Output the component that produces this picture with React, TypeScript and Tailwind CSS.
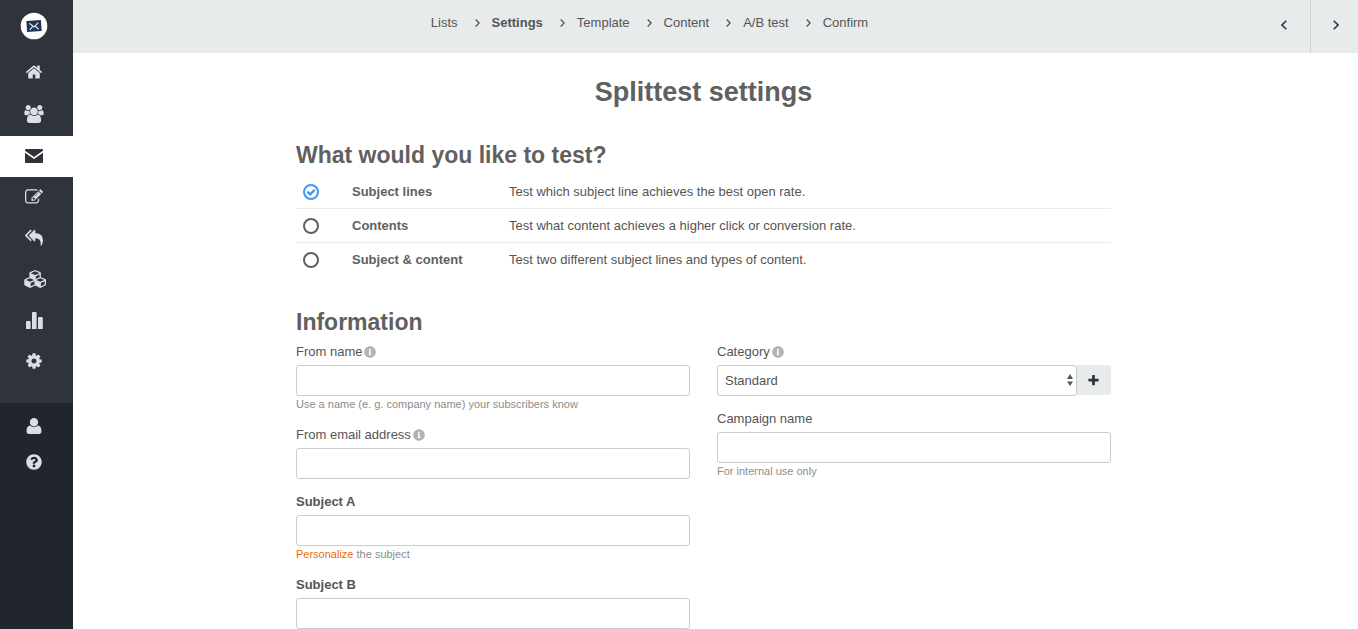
import { FC, Fragment, ReactNode, useState } from "react"
import { FaInfoCircle, FaQuestionCircle } from "react-icons/fa"
import clsx from "clsx"

interface GlyphProps {
  d: string
  className?: string
  viewBox?: string
}

const Glyph: FC<GlyphProps> = ({ d, className, viewBox = "0 0 1792 1792" }) => (
  <svg viewBox={viewBox} className={clsx("block shrink-0", className)} fill="currentColor" aria-hidden="true">
    <path d={d} />
  </svg>
)

const paths = {
  home: "M1472 992v480q0 26-19 45t-45 19h-384v-384h-256v384h-384q-26 0-45-19t-19-45v-480q0-1 .5-3t.5-3l575-474 575 474q1 2 1 6zm223-69l-62 74q-8 9-21 11h-3q-13 0-21-7l-692-577-692 577q-12 8-24 7-13-2-21-11l-62-74q-8-10-7-23.5t11-21.5l719-599q32-26 76-26t76 26l244 204v-195q0-14 9-23t23-9h192q14 0 23 9t9 23v408l219 182q10 8 11 21.5t-7 23.5z",
  users: "M529 896q-162 5-265 128h-134q-82 0-138-40.5t-56-118.5q0-353 124-353 6 0 43.5 21t97.5 42.5 119 21.5q67 0 133-23-5 37-5 66 0 139 81 256zm1071 637q0 120-73 189.5t-194 69.5h-874q-121 0-194-69.5t-73-189.5q0-53 3.5-103.5t14-109 26.5-108.5 43-97.5 62-81 85.5-53.5 111.5-20q10 0 43 21.5t73 48 107 48 135 21.5 135-21.5 107-48 73-48 43-21.5q61 0 111.5 20t85.5 53.5 62 81 43 97.5 26.5 108.5 14 109 3.5 103.5zm-1024-1277q0 106-75 181t-181 75-181-75-75-181 75-181 181-75 181 75 75 181zm704 384q0 159-112.5 271.5t-271.5 112.5-271.5-112.5-112.5-271.5 112.5-271.5 271.5-112.5 271.5 112.5 112.5 271.5zm576 225q0 78-56 118.5t-138 40.5h-134q-103-123-265-128 81-117 81-256 0-29-5-66 66 23 133 23 59 0 119-21.5t97.5-42.5 43.5-21q124 0 124 353zm-128-609q0 106-75 181t-181 75-181-75-75-181 75-181 181-75 181 75 75 181z",
  envelope: "M1 2h16q1 0 1 1v.8L9 10 0 3.8V3q0-1 1-1zM0 5.8 9 12l9-6.2V15q0 1-1 1H1q-1 0-1-1z",
  edit: "M888 1184l116-116-152-152-116 116v56h96v96h56zm440-720q-16-16-33 1l-350 350q-17 17-1 33t33-1l350-350q17-17 1-33zm80 594v190q0 119-84.5 203.5t-203.5 84.5h-832q-119 0-203.5-84.5t-84.5-203.5v-832q0-119 84.5-203.5t203.5-84.5h832q63 0 117 25 15 7 18 23 3 17-9 29l-49 49q-14 14-32 8-23-6-45-6h-832q-66 0-113 47t-47 113v832q0 66 47 113t113 47h832q66 0 113-47t47-113v-126q0-13 9-22l64-64q15-15 35-7t20 29zm-96-738l288 288-672 672h-288v-288zm444 132l-92 92-288-288 92-92q28-28 68-28t68 28l152 152q28 28 28 68t-28 68z",
  replyAll: "M640 1082v70q0 42-39 59-13 5-25 5-27 0-45-19l-512-512q-19-19-19-45t19-45l512-512q29-31 70-14 39 17 39 59v69l-397 398q-19 19-19 45t19 45zm1152 58q0 58-17 133.5t-38.5 138-48 125-40.5 90.5l-20 40q-8 17-28 17-6 0-9-1-25-8-23-34 43-400-106-565-64-71-170.5-110.5t-267.5-52.5v251q0 42-39 59-13 5-25 5-27 0-45-19l-512-512q-19-19-19-45t19-45l512-512q29-31 70-14 39 17 39 59v262q411 28 599 221 169 173 169 509z",
  cubes: "M640 1632l384-192v-314l-384 164v342zm-64-454l404-173-404-173-404 173zm1088 454l384-192v-314l-384 164v342zm-64-454l404-173-404-173-404 173zm-448-293l384-165v-266l-384 164v267zm-64-379l441-189-441-189-441 189zm1088 518v416q0 36-19 67t-52 47l-448 224q-25 14-57 14t-57-14l-448-224q-4-2-7-4-2 2-7 4l-448 224q-25 14-57 14t-57-14l-448-224q-33-16-52-47t-19-67v-416q0-38 21.5-70t56.5-48l434-186v-400q0-38 21.5-70t56.5-48l448-192q23-10 50-10t50 10l448 192q35 16 56.5 48t21.5 70v400l434 186q36 16 57 48t21 70z",
  bars: "M1 18v-7q0-1 1-1h2.6q1 0 1 1v7zM7 18V2q0-1 1-1h2.6q1 0 1 1v16zM13 18V7q0-1 1-1h2.8q1 0 1 1v11z",
  cog: "M1152 896q0-106-75-181t-181-75-181 75-75 181 75 181 181 75 181-75 75-181zm512-109v222q0 12-8 23t-20 13l-185 28q-19 54-39 91 35 50 107 138 10 12 10 25t-9 23q-27 37-99 108t-94 71q-12 0-26-9l-138-108q-44 23-91 38-16 136-29 186-7 28-36 28h-222q-14 0-24.5-8.5t-11.5-21.5l-28-184q-49-16-90-37l-141 107q-10 9-25 9-14 0-25-11-126-114-165-168-7-10-7-23 0-12 8-23 15-21 51-66.5t54-70.5q-27-50-41-99l-183-27q-13-2-21-12.5t-8-23.5v-222q0-12 8-23t19-13l186-28q14-46 39-92-40-57-107-138-10-12-10-24 0-10 9-23 26-36 98.5-107.5t94.5-71.5q13 0 26 10l138 107q44-23 91-38 16-136 29-186 7-28 36-28h222q14 0 24.5 8.5t11.5 21.5l28 184q49 16 90 37l142-107q9-9 24-9 13 0 25 10 129 119 165 170 7 8 7 22 0 12-8 23-15 21-51 66.5t-54 70.5q26 50 41 98l183 28q13 2 21 12.5t8 23.5z",
  user: "M8 0a4 4 0 1 1 0 8.4A4 4 0 0 1 8 0zM4.2 7.6C5.2 8.8 6.5 9.3 8 9.3s2.8-.5 3.8-1.7c2.6.3 3.7 2.4 3.7 5.6 0 1.7-1.1 2.8-2.6 2.8H3.1C1.600 16 .5 14.900.5 13.200.5 10 1.600 7.900 4.200 7.600z",
  plus: "M1600 736v192q0 40-28 68t-68 28h-416v416q0 40-28 68t-68 28h-192q-40 0-68-28t-28-68v-416h-416q-40 0-68-28t-28-68v-192q0-40 28-68t68-28h416v-416q0-40 28-68t68-28h192q40 0 68 28t28 68v416h416q40 0 68 28t28 68z",
}

const Chevron: FC<{ left?: boolean; className: string }> = ({ left, className }) => (
  <svg viewBox="0 0 6 10" className={clsx("block", className)} fill="none" stroke="currentColor" aria-hidden="true">
    <path d={left ? "M5.3 .7 1 5l4.3 4.3" : "M.7 .7 5 5 .7 9.3"} strokeWidth="1.6" />
  </svg>
)

const Logo = () => (
  <svg viewBox="0 0 28 28" className="size-7" aria-hidden="true">
    <circle cx="14" cy="14" r="13.3" fill="#fff" />
    <g transform="rotate(-4 14 14)">
      <rect x="6.700" y="8.600" width="14.600" height="11" fill="#1e3450" />
      <path d="M9.500 11l4.500 4 4.500-4M9.500 17.600l3-3M18.500 17.600l-3-3" stroke="#dfe6ee" strokeWidth="1.200" fill="none" />
    </g>
  </svg>
)

interface SideLinkProps {
  label: string
  active?: boolean
  small?: boolean
  children: ReactNode
}

const SideLink: FC<SideLinkProps> = ({ label, active, small, children }) => (
  <a
    href="#"
    aria-label={label}
    className={clsx(
      "flex items-center justify-center pr-[5px]",
      small ? "h-9" : "h-[41px] pb-px",
      active ? "bg-white text-[#2f333c]" : "text-[#dadee8]"
    )}
  >
    {children}
  </a>
)

const Sidebar = () => (
  <aside className="w-[73px] shrink-0 bg-[#21252e]">
    <nav className="bg-[#2f333c] pb-[21px]">
      <a href="#" aria-label="Dashboard" className="flex h-[52px] items-center justify-center pr-[5px]">
        <Logo />
      </a>
      <div className="flex flex-col gap-px">
        <SideLink label="Home"><Glyph d={paths.home} className="size-[18px]" /></SideLink>
        <SideLink label="Contacts"><Glyph d={paths.users} viewBox="-64 0 1920 1792" className="h-[18px] w-5" /></SideLink>
        <SideLink label="Campaigns" active><Glyph d={paths.envelope} viewBox="0 0 18 18" className="size-[18px]" /></SideLink>
      </div>
      <SideLink label="Forms"><Glyph d={paths.edit} className="size-[18px]" /></SideLink>
      <SideLink label="Autoresponders"><Glyph d={paths.replyAll} className="size-[18px]" /></SideLink>
      <SideLink label="Modules"><Glyph d={paths.cubes} viewBox="-128 0 2304 1792" className="h-[18px] w-[23px]" /></SideLink>
      <SideLink label="Reports"><Glyph d={paths.bars} viewBox="0 0 18 18" className="size-[18px]" /></SideLink>
      <SideLink label="Preferences"><Glyph d={paths.cog} className="size-[18px]" /></SideLink>
    </nav>
    <nav className="pt-[5px]">
      <SideLink label="Account" small><Glyph d={paths.user} viewBox="0 0 16 16" className="size-4" /></SideLink>
      <SideLink label="Help" small><FaQuestionCircle className="size-4" /></SideLink>
    </nav>
  </aside>
)

const steps = ["Lists", "Settings", "Template", "Content", "A/B test", "Confirm"]

const Header = () => (
  <header className="flex h-[53px] bg-[#e8ebec]">
    <nav className="flex flex-1 justify-center pt-[13px] pr-8" aria-label="Steps">
      <ol className="flex h-5 items-center">
        {steps.map((step, i) => (
          <Fragment key={step}>
            {i > 0 && <li className="mr-3 ml-[17px]" aria-hidden="true"><Chevron className="h-2 w-[5px]" /></li>}
            <li><a href="#" className={clsx(step === "Settings" && "font-bold")}>{step}</a></li>
          </Fragment>
        ))}
      </ol>
    </nav>
    <button aria-label="Previous" className="flex w-[53px] items-center justify-center border-r border-[#cfd2d4] pb-[3px] text-[#33373f]">
      <Chevron left className="h-[10px] w-[6px]" />
    </button>
    <button aria-label="Next" className="flex w-[47px] items-center justify-center pb-[3px] pl-[3px] text-[#33373f]">
      <Chevron className="h-[10px] w-[6px]" />
    </button>
  </header>
)

const options = [
  { id: "subject", label: "Subject lines", text: "Test which subject line achieves the best open rate." },
  { id: "content", label: "Contents", text: "Test what content achieves a higher click or conversion rate." },
  { id: "both", label: "Subject & content", text: "Test two different subject lines and types of content." },
]

const TestOptions = () => {
  const [selected, setSelected] = useState("subject")
  return (
    <div className="divide-y divide-[#ebebeb]">
      {options.map(({ id, label, text }) => (
        <label key={id} className="grid h-[34px] grid-cols-[56px_157px_1fr] items-center">
          <span className="relative ml-[7px] flex size-4">
            <input
              type="radio"
              name="test"
              value={id}
              checked={selected === id}
              onChange={() => setSelected(id)}
              className="peer size-4 appearance-none rounded-full border-2 border-[#606060] checked:border-[#3f97f6]"
            />
            <svg viewBox="0 0 16 16" className="pointer-events-none absolute inset-0 hidden size-4 peer-checked:block" fill="none" stroke="#3f97f6" strokeWidth="2.4" aria-hidden="true">
              <path d="M4.4 7.6 7.2 10.3 11.7 5.8" />
            </svg>
          </span>
          <span className="font-bold text-[#606060]">{label}</span>
          <span>{text}</span>
        </label>
      ))}
    </div>
  )
}

const controlStyle = "h-[31px] w-full rounded-[3px] border border-[#ccc] bg-white px-[7px]"

interface FieldProps {
  id: string
  label: string
  bold?: boolean
  info?: boolean
  help?: ReactNode
  children?: ReactNode
}

const Field: FC<FieldProps> = ({ id, label, bold, info, help, children }) => (
  <div>
    <div className="mb-[3px] flex h-5 items-center gap-[2px]">
      <label htmlFor={id} className={clsx(bold && "font-bold")}>{label}</label>
      {info && <FaInfoCircle className="size-3 text-[#b3b3b3]" />}
    </div>
    {children ?? <input id={id} type="text" className={clsx(controlStyle, "block")} />}
    {help && <p className="pt-px text-[11px] leading-[15px] text-[#8c8c8c]">{help}</p>}
  </div>
)

const CategorySelect = () => (
  <div className="flex">
    <div className="relative flex-1">
      <select id="category" className={clsx(controlStyle, "appearance-none")}>
        <option>Standard</option>
      </select>
      <svg viewBox="0 0 6 12" className="pointer-events-none absolute top-[9px] right-1 h-3 w-[6px]" fill="#555" aria-hidden="true">
        <path d="M3 0l3 5H0zM3 12L0 7.5h6z" />
      </svg>
    </div>
    <button aria-label="Add category" className="flex h-[30px] w-[34px] items-center justify-center rounded-r-[3px] bg-[#e8ebec] pr-[2px] text-[#2f333c]">
      <Glyph d={paths.plus} className="size-[13px]" />
    </button>
  </div>
)

export default function App() {
  return (
    <div className="flex min-h-screen bg-white font-['Helvetica_Neue','Liberation_Sans',sans-serif] text-[13px] leading-5 text-[#555]">
      <Sidebar />
      <div className="flex-1">
        <Header />
        <main className="pr-6">
          <div className="mx-auto max-w-[815px]">
            <h1 className="pt-[23px] text-center text-[27px] leading-8 font-bold text-[#606060]">Splittest settings</h1>
            <section className="pt-[31px]">
              <h2 className="pb-1 text-[23px] leading-8 font-bold text-[#606060]">What would you like to test?</h2>
              <TestOptions />
            </section>
            <section className="pt-[29px]">
              <h2 className="pb-1 text-[23px] leading-8 font-bold text-[#606060]">Information</h2>
              <div className="grid grid-cols-2 gap-x-[27px]">
                <div className="flex flex-col gap-[13px]">
                  <Field id="from-name" label="From name" info help="Use a name (e. g. company name) your subscribers know" />
                  <Field id="from-email" label="From email address" info />
                  <Field
                    id="subject-a"
                    label="Subject A"
                    bold
                    help={<><a href="#" className="text-[#ed6b06]">Personalize</a> the subject</>}
                  />
                  <Field id="subject-b" label="Subject B" bold />
                </div>
                <div className="flex flex-col gap-[13px]">
                  <Field id="category" label="Category" info><CategorySelect /></Field>
                  <Field id="campaign" label="Campaign name" help="For internal use only" />
                </div>
              </div>
            </section>
          </div>
        </main>
      </div>
    </div>
  )
}
